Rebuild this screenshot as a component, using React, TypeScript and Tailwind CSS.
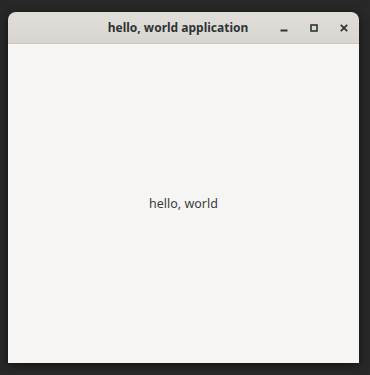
import React from 'react';

function App() {
  return (
    <div className="w-[370px] h-[375px] bg-[#282828] pt-[12px] pl-[8px]" style={{ fontFamily: '"Noto Sans", "DejaVu Sans", sans-serif' }}>
      <div className="w-[351px] h-[351px] flex flex-col rounded-t-[8px] overflow-hidden shadow-[0_2px_8px_rgba(0,0,0,0.6)]">
        {/* Header bar */}
        <div className="h-[32px] shrink-0 flex items-center bg-gradient-to-b from-[#e1ded9] to-[#d9d6d1] border-b border-[#c9c5bf] relative">
          <div className="flex-1 text-center text-[12px] font-bold text-[#2e3436] pr-[11px] leading-none">
            hello, world application
          </div>
          <div className="flex items-center gap-[14px] pr-[7px] absolute right-0 top-0 h-full">
            <svg width="16" height="16" viewBox="0 0 16 16">
              <rect x="4.5" y="9.5" width="7" height="2" fill="#2e3436" />
            </svg>
            <svg width="16" height="16" viewBox="0 0 16 16">
              <rect x="5" y="5" width="6" height="6" fill="none" stroke="#2e3436" strokeWidth="1.6" />
            </svg>
            <svg width="16" height="16" viewBox="0 0 16 16">
              <path d="M4.8 4.8 L11.2 11.2 M11.2 4.8 L4.8 11.2" stroke="#2e3436" strokeWidth="1.8" />
            </svg>
          </div>
        </div>
        {/* Content */}
        <div className="flex-1 bg-[#f6f5f4] flex items-center justify-center pt-[2px]">
          <span className="text-[12.5px] text-[#3a3d3e]">hello, world</span>
        </div>
      </div>
    </div>
  );
}

export default App;
